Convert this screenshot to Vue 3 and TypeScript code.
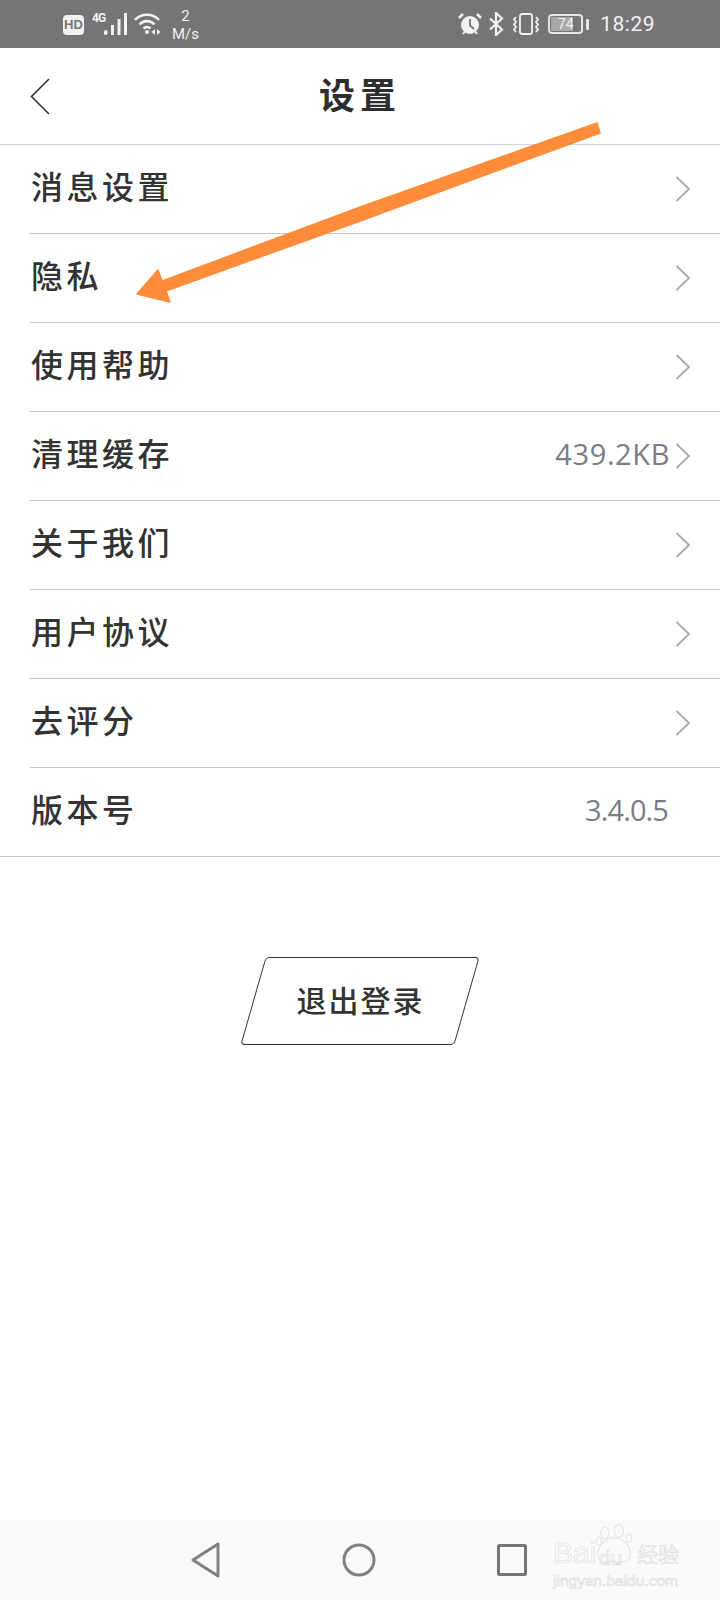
<script setup lang="ts">
interface Row {
  label: string;
  value?: string;
  valueClass?: string;
  arrow: boolean;
}

const rows: Row[] = [
  { label: "消息设置", arrow: true },
  { label: "隐私", arrow: true },
  { label: "使用帮助", arrow: true },
  { label: "清理缓存", value: "439.2KB", valueClass: "wide", arrow: true },
  { label: "关于我们", arrow: true },
  { label: "用户协议", arrow: true },
  { label: "去评分", arrow: true },
  { label: "版本号", value: "3.4.0.5", valueClass: "tight", arrow: false },
];
</script>

<template>
  <div class="page">
    <!-- Status Bar -->
    <div class="status-bar">
      <div class="status-left">
        <span class="hd">HD</span>
        <div class="signal">
          <span class="net">4G</span>
          <svg width="24" height="24" viewBox="0 0 24 24">
            <rect x="0" y="18" width="3.5" height="5" rx="1.7" fill="#f2f2f2" />
            <rect x="7" y="13" width="3" height="10" fill="#f2f2f2" />
            <rect x="13.500" y="7" width="3" height="16" fill="#f2f2f2" />
            <rect x="20" y="1" width="3" height="22" fill="#f2f2f2" />
          </svg>
        </div>
        <svg class="wifi" width="28" height="24" viewBox="0 0 28 24" fill="none" stroke="#f2f2f2" stroke-width="2.6">
          <path d="M1 8 C7 1 19 1 25 8" />
          <path d="M5.5 12.5 C9.5 8 16.5 8 20.5 12.5" />
          <path d="M9.5 16.5 C11.5 14.5 14.5 14.5 16.5 16.5" />
          <circle cx="13" cy="20" r="2" fill="#f2f2f2" stroke="none" />
          <path d="M21 17 L17.5 20 L21 23 Z M23 17 L26.500 20 L23 23 Z" fill="#f2f2f2" stroke="none" />
        </svg>
        <div class="speed"><span>2</span><span>M/s</span></div>
      </div>
      <div class="status-right">
        <svg width="24" height="24" viewBox="0 0 24 24">
          <circle cx="12" cy="13" r="9" fill="#f2f2f2" />
          <path d="M12 7 V13.500 L16 17" fill="none" stroke="#757575" stroke-width="1.800" />
          <path d="M1 6 L5 2 M23 6 L19 2" stroke="#f2f2f2" stroke-width="2.500" />
          <path d="M5 22 L6.500 20 M19 22 L17.500 20" stroke="#f2f2f2" stroke-width="2" />
        </svg>
        <svg class="bt" width="16" height="24" viewBox="0 0 16 24" fill="none" stroke="#f2f2f2" stroke-width="2.200">
          <path d="M2 6.500 L14 17.500 L8 23 V1 L14 6.500 L2 17.500" />
        </svg>
        <svg width="28" height="24" viewBox="0 0 28 24" fill="none" stroke="#f2f2f2" stroke-width="1.800">
          <rect x="8" y="2" width="12" height="20" rx="2" />
          <path d="M4 5 L2 7.500 L4 10 L2 12.500 L4 15 L2 17.500 L4 20" />
          <path d="M24 5 L26 7.500 L24 10 L26 12.500 L24 15 L26 17.500 L24 20" />
        </svg>
        <div class="battery">
          <div class="battery-box">
            <div class="battery-fill"></div>
            <span class="battery-num">74</span>
          </div>
          <div class="battery-nub"></div>
        </div>
        <span class="time">18:29</span>
      </div>
    </div>

    <!-- Header -->
    <div class="header">
      <svg class="back" width="20" height="37" viewBox="0 0 20 37" fill="none" stroke="#333" stroke-width="1.600">
        <path d="M19 1 L1.500 18.500 L19 36" />
      </svg>
      <span class="title">设置</span>
    </div>

    <!-- List -->
    <div class="list">
      <div v-for="row in rows" :key="row.label" class="row">
        <span class="row-label">{{ row.label }}</span>
        <span v-if="row.value" class="row-value" :class="row.valueClass">{{ row.value }}</span>
        <svg v-if="row.arrow" class="chevron" width="16" height="26" viewBox="0 0 16 26" fill="none" stroke="#aaa" stroke-width="1.800">
          <path d="M1.500 1 L14 13 L1.500 25" />
        </svg>
        <span v-else class="chevron-gap"></span>
      </div>
    </div>

    <div class="logout-wrap">
      <button class="logout"><span>退出登录</span></button>
    </div>

    <!-- Nav Bar -->
    <div class="nav">
      <svg width="30" height="36" viewBox="0 0 30 36" fill="none" stroke="#808080" stroke-width="3" stroke-linejoin="round">
        <path d="M2 18 L27 2 V34 Z" />
      </svg>
      <svg width="34" height="34" viewBox="0 0 34 34" fill="none" stroke="#808080" stroke-width="3">
        <circle cx="17" cy="17" r="15" />
      </svg>
      <svg width="30" height="32" viewBox="0 0 30 32" fill="none" stroke="#757575" stroke-width="3" stroke-linejoin="round">
        <rect x="1.500" y="1.500" width="27" height="29" rx="1" />
      </svg>
    </div>

    <!-- Annotation arrow -->
    <svg class="annotation" width="720" height="320" viewBox="0 0 720 320">
      <path d="M597 123 L600 133 L363 220 L166 291 L170 302 L137 294 L158 270 L162 281 L363 206 Z" fill="#ff8c3a" stroke="#ff8c3a" stroke-width="1.500" stroke-linejoin="round" />
    </svg>

    <!-- Watermark -->
    <div class="watermark">
      <svg class="paw" width="36" height="40" viewBox="0 0 36 40" fill="none" stroke="#e4e4e4" stroke-width="1.200">
        <ellipse cx="9" cy="9" rx="4" ry="6" />
        <ellipse cx="23" cy="7" rx="4.500" ry="6.500" />
        <ellipse cx="33" cy="14" rx="2.500" ry="4.500" />
        <ellipse cx="3" cy="17" rx="2.500" ry="4" />
        <path d="M18 14 C30 14 35 25 34 32 C33 39 24 39 18 37 C12 39 3 39 2 32 C1 25 6 14 18 14 Z" />
      </svg>
      <div class="wm-main"><span class="wm-bai">Bai</span><span class="wm-du">du</span><span class="wm-cn">经验</span></div>
      <div class="wm-url">jingyan.baidu.com</div>
    </div>
  </div>
</template>

<style>
body {
  margin: 0;
  background: #fff;
}
</style>

<style scoped>
.page {
  position: relative;
  width: 720px;
  height: 1600px;
  display: flex;
  flex-direction: column;
  overflow: hidden;
  background: #fff;
  font-family: "Noto Sans CJK SC", "Noto Sans", sans-serif;
  color: #333;
}

.status-bar {
  height: 48px;
  flex: none;
  background: #757575;
  display: flex;
  justify-content: space-between;
  align-items: center;
  padding: 0 65px 0 63px;
  color: #f2f2f2;
}

.status-left,
.status-right {
  display: flex;
  align-items: center;
}

.hd {
  width: 21px;
  height: 20px;
  margin-top: 2px;
  border-radius: 4px;
  background: #f2f2f2;
  color: #757575;
  font: 700 13px/20px "Liberation Sans", sans-serif;
  text-align: center;
}

.signal {
  display: flex;
  align-items: flex-end;
  margin-left: 8px;
  height: 24px;
}

.net {
  font: 700 12px/12px "Roboto", sans-serif;
  letter-spacing: -1px;
  align-self: flex-start;
  width: 12px;
}

.wifi {
  margin-left: 6px;
}

.speed {
  display: flex;
  flex-direction: column;
  align-items: center;
  margin-left: 10px;
  font: 15px/18px "Roboto", sans-serif;
  margin-top: 1px;
}

.status-right {
  gap: 8px;
}

.bt {
  margin-left: -2px;
}

.battery {
  display: flex;
  align-items: center;
  gap: 3px;
}

.battery-box {
  position: relative;
  width: 35px;
  height: 20px;
  box-sizing: border-box;
  border: 2px solid #e6e6e6;
  border-radius: 4px;
  padding: 1px;
}

.battery-fill {
  width: 74%;
  height: 100%;
  background: #a8a8a8;
}

.battery-num {
  position: absolute;
  inset: 0;
  font: 14px/16px "Roboto", sans-serif;
  text-align: center;
}

.battery-nub {
  width: 3px;
  height: 11px;
  background: #e6e6e6;
  border-radius: 1px;
}

.time {
  margin-left: 3px;
  font: 21px/24px "Roboto", sans-serif;
  letter-spacing: 0.5px;
}

.header {
  position: relative;
  height: 96px;
  flex: none;
  display: flex;
  align-items: center;
  justify-content: center;
  border-bottom: 1px solid #d4d4d4;
  box-sizing: content-box;
}

.back {
  position: absolute;
  left: 30px;
  top: 30px;
}

.title {
  padding-bottom: 6px;
  font-size: 36px;
  font-weight: 700;
  letter-spacing: 5px;
  color: #2e2e2e;
}

.list {
  flex: none;
  border-bottom: 1px solid #c4c4c4;
}

.row {
  height: 88px;
  margin-left: 30px;
  padding-right: 29px;
  display: flex;
  align-items: center;
  border-bottom: 1px solid #c4c4c4;
}

.row:last-child {
  height: 88px;
  border-bottom: none;
}

.row-label {
  margin-right: auto;
  margin-left: 1px;
  padding-bottom: 8px;
  font-size: 32px;
  font-weight: 500;
  letter-spacing: 3.5px;
  color: #333;
}

.row-value {
  padding-bottom: 4px;
  font: 29px/36px "Open Sans", "Noto Sans", sans-serif;
  color: #7a7d85;
}

.row-value.wide {
  letter-spacing: 0.6px;
}

.row-value.tight {
  margin-right: 2px;
  letter-spacing: -0.9px;
}

.chevron {
  margin-left: 5px;
  flex: none;
}

.chevron-gap {
  width: 21px;
  flex: none;
}

.logout-wrap {
  display: flex;
  justify-content: center;
  margin-top: 100px;
}

.logout {
  width: 214px;
  height: 88px;
  padding: 0 0 4px;
  border: 1.500px solid #333;
  border-radius: 4px;
  background: #fff;
  transform: skewX(-16deg);
  font-family: inherit;
  font-size: 30px;
  font-weight: 500;
  letter-spacing: 2px;
  color: #333;
}

.logout span {
  display: block;
  transform: skewX(16deg);
}

.nav {
  margin-top: auto;
  height: 80px;
  flex: none;
  background: #fafafa;
  box-sizing: border-box;
  padding: 0 193px 0 191px;
  display: flex;
  align-items: center;
  justify-content: space-between;
}

.annotation {
  position: absolute;
  left: 0;
  top: 0;
  pointer-events: none;
}

.watermark {
  position: absolute;
  left: 553px;
  top: 1524px;
  width: 130px;
  height: 64px;
  color: transparent;
  -webkit-text-stroke: 0.7px #dedede;
}

.paw {
  position: absolute;
  left: 43px;
  top: 0;
}

.wm-main {
  position: absolute;
  left: 0;
  top: 14px;
  width: 130px;
  height: 30px;
  line-height: 30px;
  font-family: "Liberation Sans", sans-serif;
}

.wm-bai {
  position: absolute;
  left: 0;
  font-size: 30px;
}

.wm-du {
  position: absolute;
  left: 46px;
  top: 5px;
  font-size: 21px;
}

.wm-cn {
  position: absolute;
  left: 84px;
  font-family: "Noto Sans CJK SC", sans-serif;
  font-size: 21px;
}

.wm-url {
  position: absolute;
  left: 0;
  top: 48px;
  width: 130px;
  font: 15.500px/18px "Liberation Sans", sans-serif;
  white-space: nowrap;
}
</style>
